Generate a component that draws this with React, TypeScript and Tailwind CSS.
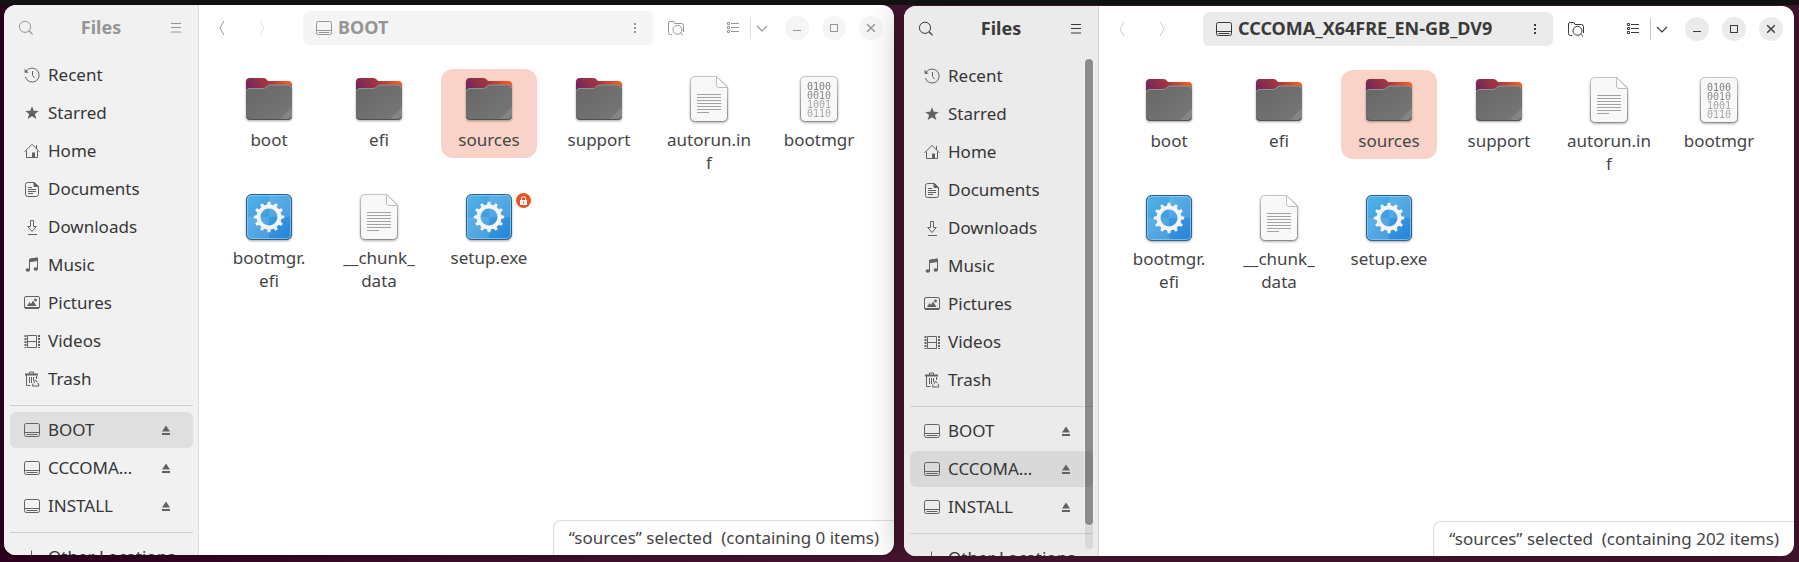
import React, { useId } from "react";
import clsx from "clsx";

type IconProps = { children: React.ReactNode; className?: string };

function Glyph({ children, className }: IconProps) {
  return (
    <svg
      viewBox="0 0 16 16"
      className={clsx("size-4 shrink-0", className)}
      fill="none"
      stroke="currentColor"
      strokeWidth="1"
      aria-hidden="true"
    >
      {children}
    </svg>
  );
}

const icons = {
  search: (
    <>
      <circle cx="7" cy="6.8" r="5.6" />
      <path d="M11 10.8l3.6 3.6" strokeWidth="1.3" />
    </>
  ),
  menu: <path d="M3 3.5h10M3 7.5h10M3 12h10" />,
  recent: (
    <>
      <path d="M2.3 4.2A7 7 0 1 1 1.4 10" />
      <path d="M.6 1.8v4h4z" fill="currentColor" stroke="none" />
      <path d="M8.5 4v4.6l2.2 2.4" />
    </>
  ),
  star: (
    <path
      d="M8 1.2l1.8 4.6 5 .2-3.9 3.1 1.4 4.8L8 11.2l-4.3 2.7 1.4-4.8L1.200 6l5-.2z"
      fill="currentColor"
      stroke="none"
    />
  ),
  home: (
    <>
      <path d="M.6 8.800L8 1.300l7.400 7.500M2.500 7.500v7h11v-7M12.500 2v4" />
      <path d="M8 9.500h3v5H8z" fill="currentColor" stroke="none" />
    </>
  ),
  documents: (
    <>
      <path d="M3.500 1.500h7l4 4v8a2 2 0 0 1-2 2h-9a2 2 0 0 1-2-2v-10a2 2 0 0 1 2-2z" />
      <path d="M10 1.500v4h4.500z" fill="currentColor" />
      <path d="M4 6.500h4M4 8.500h8M4 10.500h8M4 12.500h5" />
    </>
  ),
  downloads: <path d="M6.500 1.500h3v6h2.800L8 12.500 3.700 7.500h2.800zM4 15.500h9" />,
  music: (
    <>
      <path d="M5.500 13V2.500L13.500 1v11" />
      <path d="M5.500 2.200l8-1.200v2.500l-8 1.200z" fill="currentColor" />
      <ellipse cx="3.800" cy="13" rx="2.200" ry="1.800" fill="currentColor" stroke="none" />
      <ellipse cx="11.800" cy="12" rx="2.200" ry="1.800" fill="currentColor" stroke="none" />
    </>
  ),
  pictures: (
    <>
      <rect x=".5" y="1.500" width="15" height="12" rx="1.500" />
      <path d="M1 13h14" strokeWidth="2" />
      <path d="M3 11l2.500-4L7 9l2-3.500L12.500 11z" fill="currentColor" stroke="none" />
      <circle cx="11.500" cy="5" r="1.400" fill="currentColor" stroke="none" />
    </>
  ),
  videos: (
    <>
      <path d="M3.500 2.500h9v12h-9zM3.500 8.500h9" />
      <path d="M1.500 2v13M15 2v13" strokeWidth="2" strokeDasharray="2 1" />
    </>
  ),
  trash: (
    <>
      <path d="M1 3.500h13" strokeWidth="2" />
      <path d="M5.500 3V1h4v2M2.500 4v10.500h4M12.500 5v3M5.500 6v6M7.500 6v6M9.500 6v4" />
      <path d="M10 12l1.500-3 2 2.200M9 12.500l-.5 2.500h6.500l-1-3" />
    </>
  ),
  drive: (
    <>
      <rect x=".5" y="1.500" width="15" height="13" rx="1.800" />
      <path d="M1 10.500h14M2.500 12.500h11" />
    </>
  ),
  eject: (
    <path d="M8 3.500l4 6H4zM4 11h8v2H4z" fill="currentColor" stroke="none" />
  ),
  plus: <path d="M7.500 1.500v13M1 8h13" />,
  back: <path d="M10 1L6 8l4 7" />,
  forward: <path d="M6 1l4 7-4 7" />,
  dots: (
    <path d="M7 3h2v2H7zM7 7h2v2H7zM7 11h2v2H7z" fill="currentColor" stroke="none" />
  ),
  folderSearch: (
    <>
      <path d="M4 14.500H2.500a2 2 0 0 1-2-2V3A1.500 1.500 0 0 1 2 1.500h4l1 2h6.500a2 2 0 0 1 2 2V12" />
      <circle cx="9.500" cy="9.800" r="4.500" />
      <path d="M12.500 13l2.500 2.300" />
    </>
  ),
  list: (
    <>
      <path d="M2.500 2.500h2v2h-2zM2.500 6.500h2v2h-2zM2.500 10.500h2v2h-2z" />
      <path d="M6 3.500h8M6 7.500h8M6 11.500h8" />
    </>
  ),
  chevron: <path d="M3 6l5 5 5-5" strokeWidth="1.200" />,
  minimize: <path d="M4 10.500h8" />,
  maximize: <rect x="4.500" y="4.500" width="7" height="7" />,
  close: <path d="M4.200 4.200l7.600 7.600M11.800 4.200l-7.600 7.600" strokeWidth="1.400" />,
};

type IconName = keyof typeof icons;

function Icon({ name, className }: { name: IconName; className?: string }) {
  return <Glyph className={className}>{icons[name]}</Glyph>;
}

function FolderArt() {
  const id = useId();
  return (
    <svg viewBox="0 0 48 48" className="size-12 drop-shadow-[0_1px_1px_rgba(0,0,0,0.35)]" aria-hidden="true">
      <defs>
        <linearGradient id={id + "b"} x1="0" y1="0.400" x2="1" y2="0">
          <stop offset="0" stopColor="#6d2560" />
          <stop offset="0.250" stopColor="#8c2f4c" />
          <stop offset="0.500" stopColor="#a5373f" />
          <stop offset="0.850" stopColor="#f4581f" />
        </linearGradient>
        <linearGradient id={id + "f"} x1="0" y1="0" x2="1" y2="1">
          <stop offset="0" stopColor="#666" />
          <stop offset="1" stopColor="#787878" />
        </linearGradient>
      </defs>
      <path d="M1 7q0-4 4-4h13q2 0 3 1l2 2h20q4 0 4 4v16H1z" fill={`url(#${id}b)`} />
      <path d="M1 17q0-4 4-4h13q1.500 0 2.500-.8l2.500-2q1-.7 2-.7h18q4 0 4 4V41q0 4-4 4H5q-4 0-4-4z" fill={`url(#${id}f)`} />
      <path d="M1.500 16q.5-2.500 3.500-2.500h13q1.500 0 2.500-.8l2.500-2q1-.7 2-.7h18q3 0 3.500 3" fill="none" stroke="#929292" />
      <path d="M47 32L35 44h8q4 0 4-3z" fill="#858585" />
      <path d="M1.500 42q1 2.500 4 2.500h37q3 0 4-2.500" fill="none" stroke="#505050" />
    </svg>
  );
}

function Sheet({ folded, children }: { folded?: boolean; children: React.ReactNode }) {
  const id = useId();
  return (
    <svg viewBox="0 0 48 48" className="size-12 drop-shadow-[0_1px_1px_rgba(0,0,0,0.3)]" aria-hidden="true">
      <defs>
        <linearGradient id={id} x1="0" y1="0" x2="0" y2="1">
          <stop offset="0" stopColor="#c4c4c4" />
          <stop offset="1" stopColor="#8c8c8c" />
        </linearGradient>
      </defs>
      <path
        d={
          folded
            ? "M10 1.500h21.500L42.500 12v29.500q0 5-5 5h-27q-5 0-5-5v-35q0-5 5-5z"
            : "M10.500 1.500h27q5 0 5 5v35q0 5-5 5h-27q-5 0-5-5v-35q0-5 5-5z"
        }
        fill="#f8f8f8"
        stroke={`url(#${id})`}
      />
      {folded && <path d="M31.500 1.500V10q0 2.500 2.500 2.500h8.500z" fill="#fff" stroke="#bdbdbd" />}
      {children}
    </svg>
  );
}

function TextArt() {
  return (
    <Sheet folded>
      <path d="M12 19.500h24M12 22.500h24M12 25.500h24M12 28.500h24M12 31.500h24M12 34.500h24M12 37.500h12" stroke="#a2a2a2" />
    </Sheet>
  );
}

function BinaryArt() {
  return (
    <Sheet>
      <g fontFamily="'DejaVu Sans Mono', monospace" fontSize="10" textAnchor="middle">
        <text x="24" y="14.500" fill="#7f7f7f">0100</text>
        <text x="24" y="23.500" fill="#8a8a8a">0010</text>
        <text x="24" y="32.500" fill="#a6a6a6">1001</text>
        <text x="24" y="41.500" fill="#a6a6a6">0110</text>
      </g>
    </Sheet>
  );
}

const teeth = Array.from({ length: 12 }, (_, i) => i * 30);

function ProgramArt() {
  const id = useId();
  return (
    <svg viewBox="0 0 48 48" className="size-12 drop-shadow-[0_1px_1px_rgba(0,0,0,0.35)]" aria-hidden="true">
      <defs>
        <linearGradient id={id} x1="0" y1="0" x2="1" y2="1">
          <stop offset="0" stopColor="#55b5e8" />
          <stop offset="1" stopColor="#2383d8" />
        </linearGradient>
      </defs>
      <rect x="1.500" y="1.500" width="45" height="45" rx="5" fill={`url(#${id})`} />
      <path d="M24 2h18q4 0 4 4v18H24zM2 24h22v22H6q-4 0-4-4z" fill="#fff" opacity="0.120" />
      <rect x="2.500" y="2.500" width="43" height="43" rx="4" fill="none" stroke="#8fd0f5" opacity="0.700" />
      <rect x="1.500" y="1.500" width="45" height="45" rx="5" fill="none" stroke="#345f80" />
      <circle cx="24" cy="24" r="10.500" fill="none" stroke="#f4f4f4" strokeWidth="4" />
      {teeth.map((angle) => (
        <path key={angle} d="M22 12.500l.7-3.700h2.600l.7 3.700z" fill="#f4f4f4" transform={`rotate(${angle} 24 24)`} />
      ))}
    </svg>
  );
}

function LockBadge() {
  return (
    <span className="absolute top-1.5 right-1.5 flex size-[15px] items-center justify-center rounded-full bg-[#e95420]">
      <svg viewBox="0 0 9 9" className="size-[9px]" aria-hidden="true">
        <rect x="1" y="4" width="7" height="5" fill="#fff" />
        <path d="M2.500 4V2.500a2 2 0 0 1 4 0V4" fill="none" stroke="#fff" />
        <path d="M4.500 5.500v2" stroke="#e95420" />
      </svg>
    </span>
  );
}

type Kind = "folder" | "text" | "binary" | "program";
type Item = { lines: string; kind: Kind };

const art: Record<Kind, () => React.ReactElement> = {
  folder: FolderArt,
  text: TextArt,
  binary: BinaryArt,
  program: ProgramArt,
};

const items: Item[] = [
  { lines: "boot", kind: "folder" },
  { lines: "efi", kind: "folder" },
  { lines: "sources", kind: "folder" },
  { lines: "support", kind: "folder" },
  { lines: "autorun.in\nf", kind: "text" },
  { lines: "bootmgr", kind: "binary" },
  { lines: "bootmgr.\nefi", kind: "program" },
  { lines: "__chunk_\ndata", kind: "text" },
  { lines: "setup.exe", kind: "program" },
];

const places: { label: string; icon: IconName }[] = [
  { label: "Recent", icon: "recent" },
  { label: "Starred", icon: "star" },
  { label: "Home", icon: "home" },
  { label: "Documents", icon: "documents" },
  { label: "Downloads", icon: "downloads" },
  { label: "Music", icon: "music" },
  { label: "Pictures", icon: "pictures" },
  { label: "Videos", icon: "videos" },
  { label: "Trash", icon: "trash" },
];

const drives = [
  { name: "BOOT", label: "BOOT" },
  { name: "CCCOMA_X64FRE_EN-GB_DV9", label: "CCCOMA…" },
  { name: "INSTALL", label: "INSTALL" },
];

function SidebarRow({ label, icon }: { label: string; icon: IconName }) {
  return (
    <li>
      <a href="#" className="flex h-9 items-center gap-2 rounded-md pl-3.5 whitespace-nowrap">
        <Icon name={icon} className="text-[#626262]" />
        <span className="pb-0.5">{label}</span>
      </a>
    </li>
  );
}

function DriveRow({ name, label, selected }: { name: string; label: string; selected: boolean }) {
  return (
    <li className={clsx("flex h-9 items-center rounded-md pr-[19px] pl-3.5", selected && "bg-black/[0.075]")}>
      <a href="#" title={name} className="flex min-w-0 flex-1 items-center gap-2">
        <Icon name="drive" className="text-[#626262]" />
        <span className="pb-0.5">{label}</span>
      </a>
      <button aria-label={`Eject ${name}`} className="text-[#626262]">
        <Icon name="eject" />
      </button>
    </li>
  );
}

function HeaderButton({ name, label, className }: { name: IconName; label: string; className: string }) {
  return (
    <button aria-label={label} className={clsx("flex h-8 shrink-0 items-center justify-center", className)}>
      <Icon name={name} />
    </button>
  );
}

const windowButtons: { name: IconName; label: string }[] = [
  { name: "minimize", label: "Minimize" },
  { name: "maximize", label: "Maximize" },
  { name: "close", label: "Close" },
];

type WindowProps = { location: string; status: string; active?: boolean; locked?: string };

function FilesWindow({ location, status, active = false, locked }: WindowProps) {
  const tone = active ? "text-[#3a3a3a]" : "text-[#969696]";
  const disabled = active ? "text-[#cdcdcd]" : "text-[#dedede]";
  return (
    <section
      className={clsx(
        "flex min-w-0 flex-1 overflow-hidden rounded-xl bg-white",
        active ? "relative shadow-[0_0_36px_rgba(0,0,0,0.35)]" : "shadow-[0_0_8px_rgba(0,0,0,0.3)]",
      )}
    >
      <aside
        className={clsx(
          "relative flex w-[195px] shrink-0 flex-col border-r",
          active ? "border-[#d6d6d6] bg-[#ebebeb]" : "border-[#dcdcdc] bg-[#f1f1f1]",
        )}
      >
        <header className={clsx("flex h-[46px] shrink-0 items-center px-1.5", tone)}>
          <HeaderButton name="search" label="Search" className="w-8" />
          <h1 className="flex-1 pb-0.5 text-center text-lg leading-[23px] font-bold">Files</h1>
          <HeaderButton name="menu" label="Main menu" className="w-8" />
        </header>
        <nav className="min-h-0 flex-1 overflow-hidden pt-1.5 pr-[5px] pl-1.5 text-[#363636]">
          <ul className="flex flex-col gap-0.5">
            {places.map((place) => (
              <SidebarRow key={place.label} {...place} />
            ))}
          </ul>
          <hr className="mt-2 mb-1.5 border-[#cfcfcf]" />
          <ul className="flex flex-col gap-0.5">
            {drives.map((drive) => (
              <DriveRow key={drive.name} {...drive} selected={drive.name === location} />
            ))}
          </ul>
          <hr className="mt-2 mb-1.5 border-[#cfcfcf]" />
          <ul>
            <SidebarRow label="Other Locations" icon="plus" />
          </ul>
        </nav>
        {active && (
          <div className="absolute top-[53px] right-[5px] bottom-[7px] w-2 rounded-full bg-black/[0.08]">
            <div className="h-[95%] rounded-full bg-black/35 shadow-[0_0_0_1px_rgba(255,255,255,0.35)]" />
          </div>
        )}
      </aside>

      <main className="flex min-w-0 flex-1 flex-col">
        <header className={clsx("flex h-[46px] shrink-0 items-center pr-[11px] pl-[3px]", tone)}>
          <HeaderButton name="back" label="Back" className={clsx("w-10", active && disabled)} />
          <HeaderButton name="forward" label="Forward" className={clsx("w-10", disabled)} />
          <div
            className={clsx(
              "ml-[21px] flex h-[34px] min-w-0 flex-1 items-center gap-1.5 rounded-md pr-2.5 pl-[13px] text-lg leading-[23px] font-bold",
              active ? "bg-[#ebebeb]" : "bg-[#f5f5f5]",
            )}
          >
            <Icon name="drive" />
            <span className="flex-1 truncate pb-0.5">{location}</span>
            <HeaderButton name="dots" label="Folder menu" className="w-4" />
          </div>
          <HeaderButton name="folderSearch" label="Search folder" className="ml-[5px] w-9" />
          <HeaderButton name="list" label="List view" className="ml-[22px] w-[34px]" />
          <span className={clsx("h-[22px] w-px", active ? "bg-[#c4c4c4]" : "bg-[#dedede]")} />
          <HeaderButton name="chevron" label="View options" className="w-[22px]" />
          <div className="ml-3 flex gap-[13px]">
            {windowButtons.map((button) => (
              <button
                key={button.name}
                aria-label={button.label}
                className={clsx(
                  "flex size-6 items-center justify-center rounded-full",
                  active ? "bg-[#ebebeb]" : "bg-[#f5f5f5]",
                )}
              >
                <Icon name={button.name} />
              </button>
            ))}
          </div>
        </header>

        <ul className="flex flex-1 flex-wrap content-start items-start gap-x-3.5 gap-y-1.5 pt-[18px] pl-[22px] text-[#454545]">
          {items.map(({ lines, kind }) => {
            const Art = art[kind];
            return (
              <li key={lines} className="w-24">
                <button
                  className={clsx(
                    "relative flex w-full flex-col items-center gap-[5px] rounded-xl pt-1.5 pb-[7px]",
                    lines === "sources" && "bg-[#f9d3c7]",
                  )}
                >
                  <Art />
                  <span className="whitespace-pre-line">{lines}</span>
                  {locked === lines && <LockBadge />}
                </button>
              </li>
            );
          })}
        </ul>

        <footer className="self-end rounded-tl-lg border-t border-l border-[#dcdcdc] px-[15px] pt-[5px] pb-1.5 whitespace-pre text-[#454545]">
          {status}
        </footer>
      </main>
    </section>
  );
}

export default function App() {
  return (
    <div className="flex h-screen flex-col overflow-hidden bg-[linear-gradient(to_right,#2c001e,#3a0d28_25%,#4a1733_55%,#45152f)] font-['Noto_Sans',sans-serif] text-[17px] leading-[23px]">
      <div className="h-[5px] shrink-0 bg-[#131313]" />
      <div className="flex min-h-0 flex-1 gap-2.5 pr-[5px] pl-1">
        <div className="flex min-w-0 flex-1 pb-[7px]">
          <FilesWindow location="BOOT" status="“sources” selected  (containing 0 items)" locked="setup.exe" />
        </div>
        <div className="flex min-w-0 flex-1 pt-px pb-1.5">
          <FilesWindow
            location="CCCOMA_X64FRE_EN-GB_DV9"
            status="“sources” selected  (containing 202 items)"
            active
          />
        </div>
      </div>
    </div>
  );
}
